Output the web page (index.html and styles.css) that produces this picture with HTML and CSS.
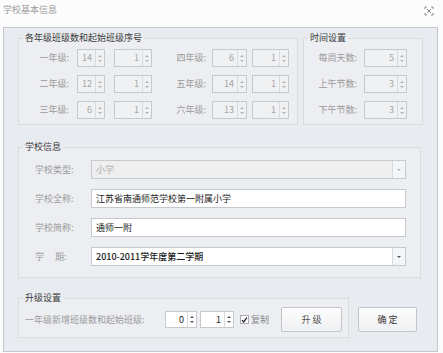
FILE: index.html
```html
<!DOCTYPE html>
<html lang="zh-CN">
<head>
    <meta charset="UTF-8">
    <title>学校基本信息</title>
    <link rel="stylesheet" href="styles.css">
</head>
<body>

<div class="titlebar">
    <span class="title">学校基本信息</span>
    <svg class="close" viewBox="0 0 10 10" width="10" height="10">
        <path d="M1 3V1h2M7 1h2v2M9 7v2H7M3 9H1V7" fill="none" stroke="#8a8a8a" stroke-width="1"/>
        <path d="M3 3l4 4M7 3l-4 4" fill="none" stroke="#8a8a8a" stroke-width="1"/>
    </svg>
</div>

<main class="panel">
    <div class="top-row">
        <fieldset class="group grades">
            <legend>各年级班级数和起始班级序号</legend>
            <div class="grade-row">
                <label class="lbl-a">一年级:</label>
                <span class="spin w28 off"><span class="val">14</span><span class="btns"><i class="up"></i><i class="dn"></i></span></span>
                <span class="spin w38 off gap9"><span class="val">1</span><span class="btns"><i class="up"></i><i class="dn"></i></span></span>
                <label class="lbl-b">四年级:</label>
                <span class="spin w35 off"><span class="val">6</span><span class="btns"><i class="up"></i><i class="dn"></i></span></span>
                <span class="spin w37 off gap5"><span class="val">1</span><span class="btns"><i class="up"></i><i class="dn"></i></span></span>
            </div>
            <div class="grade-row">
                <label class="lbl-a">二年级:</label>
                <span class="spin w28 off"><span class="val">12</span><span class="btns"><i class="up"></i><i class="dn"></i></span></span>
                <span class="spin w38 off gap9"><span class="val">1</span><span class="btns"><i class="up"></i><i class="dn"></i></span></span>
                <label class="lbl-b">五年级:</label>
                <span class="spin w35 off"><span class="val">14</span><span class="btns"><i class="up"></i><i class="dn"></i></span></span>
                <span class="spin w37 off gap5"><span class="val">1</span><span class="btns"><i class="up"></i><i class="dn"></i></span></span>
            </div>
            <div class="grade-row">
                <label class="lbl-a">三年级:</label>
                <span class="spin w28 off"><span class="val">6</span><span class="btns"><i class="up"></i><i class="dn"></i></span></span>
                <span class="spin w38 off gap9"><span class="val">1</span><span class="btns"><i class="up"></i><i class="dn"></i></span></span>
                <label class="lbl-b">六年级:</label>
                <span class="spin w35 off"><span class="val">13</span><span class="btns"><i class="up"></i><i class="dn"></i></span></span>
                <span class="spin w37 off gap5"><span class="val">1</span><span class="btns"><i class="up"></i><i class="dn"></i></span></span>
            </div>
        </fieldset>

        <fieldset class="group timing">
            <legend>时间设置</legend>
            <div class="grade-row">
                <label class="lbl-t">每周天数:</label>
                <span class="spin w43 off"><span class="val">5</span><span class="btns"><i class="up"></i><i class="dn"></i></span></span>
            </div>
            <div class="grade-row">
                <label class="lbl-t">上午节数:</label>
                <span class="spin w43 off"><span class="val">3</span><span class="btns"><i class="up"></i><i class="dn"></i></span></span>
            </div>
            <div class="grade-row">
                <label class="lbl-t">下午节数:</label>
                <span class="spin w43 off"><span class="val">3</span><span class="btns"><i class="up"></i><i class="dn"></i></span></span>
            </div>
        </fieldset>
    </div>

    <fieldset class="group school">
        <legend>学校信息</legend>
        <div class="field-row">
            <label class="lbl-s">学校类型:</label>
            <span class="input combo off"><span class="text">小学</span><span class="drop"><i class="dn"></i></span></span>
        </div>
        <div class="field-row">
            <label class="lbl-s">学校全称:</label>
            <span class="input"><span class="text">江苏省南通师范学校第一附属小学</span></span>
        </div>
        <div class="field-row">
            <label class="lbl-s">学校简称:</label>
            <span class="input"><span class="text">通师一附</span></span>
        </div>
        <div class="field-row">
            <label class="lbl-s">学&emsp;&nbsp;期:</label>
            <span class="input combo"><span class="text term">2010-2011学年度第二学期</span><span class="drop"><i class="dn dark"></i></span></span>
        </div>
    </fieldset>

    <div class="bottom-row">
        <fieldset class="group upgrade">
            <legend>升级设置</legend>
            <div class="upgrade-row">
                <label class="lbl-u">一年级新增班级数和起始班级:</label>
                <span class="spin w32 on"><span class="val">0</span><span class="btns"><i class="up dark"></i><i class="dn dark"></i></span></span>
                <span class="spin w34 on gap3"><span class="val">1</span><span class="btns"><i class="up dark"></i><i class="dn dark"></i></span></span>
                <span class="check">
                    <span class="box">
                        <svg viewBox="0 0 8 8" width="8" height="8"><path d="M1.2 4.2l1.8 2L6.8 1.2" fill="none" stroke="#222" stroke-width="1.4"/></svg>
                    </span>
                    <span class="check-text">复制</span>
                </span>
                <button class="btn up-btn">升 级</button>
            </div>
        </fieldset>
        <button class="btn ok-btn">确 定</button>
    </div>
</main>

</body>
</html>
```

FILE: styles.css
```css
:root {
    --panel-bg: #e8ebef;
    --group-bg: #eceef1;
    --group-border: #d9dde1;
    --field-border: #c5cacf;
    --label-color: #9b9b9b;
    --text-color: #222222;
    --font-cn: "Noto Sans CJK SC", "Noto Sans", sans-serif;
}

* { margin: 0; padding: 0; box-sizing: border-box; }

body {
    width: 443px;
    height: 353px;
    background: #fcfcfc;
    font-family: var(--font-cn);
    font-size: 9px;
    color: var(--text-color);
    overflow: hidden;
}

/* --- Title bar --- */
.titlebar {
    height: 27px;
    display: flex;
    justify-content: space-between;
    padding: 5px 9px 0 3px;
}
.title {
    color: #9a9a9a;
    line-height: 10px;
}
.close { margin-top: 1px; }

/* --- Main panel --- */
.panel {
    margin-left: 3px;
    width: 435px;
    height: 325px;
    background: var(--panel-bg);
    border: 1px solid #c3c7cc;
    padding: 5px 0 0 14px;
}

.group {
    border: 1px solid var(--group-border);
    background: var(--group-bg);
    min-width: 0;
}
.group legend {
    margin-left: 4px;
    padding: 0 2px;
    line-height: 10px;
    color: #3a3a3a;
}

.top-row {
    display: flex;
    gap: 5px;
}
.grades { width: 280px; padding: 6px 0 5px 0; }
.timing { width: 120px; padding: 6px 0 5px 0; }

.grade-row {
    display: flex;
    align-items: center;
    height: 18px;
}
.grade-row + .grade-row { margin-top: 8px; }

.grade-row label {
    color: var(--label-color);
    text-align: right;
    line-height: 18px;
}
.lbl-a { width: 58px; padding-right: 8px; }
.lbl-b { width: 60px; padding-right: 6px; }
.lbl-t { width: 60px; padding-right: 7px; }

/* --- Spin edit --- */
.spin {
    display: flex;
    height: 18px;
    border: 1px solid var(--field-border);
    background: #f0f1f3;
}
.spin.on { background: #ffffff; height: 17px; }
.spin .val {
    flex: 1;
    text-align: right;
    padding-right: 3px;
    line-height: 16px;
    color: #a5a5a5;
}
.spin.on .val { color: var(--text-color); line-height: 15px; }
.spin .btns {
    width: 9px;
    border-left: 1px solid #d8dbdf;
    display: flex;
    flex-direction: column;
    align-items: center;
    justify-content: center;
    gap: 3px;
}
.w28 { width: 28px; }
.w32 { width: 32px; }
.w34 { width: 34px; }
.w35 { width: 35px; }
.w37 { width: 37px; }
.w38 { width: 38px; }
.w43 { width: 43px; }
.gap3 { margin-left: 3px; }
.gap5 { margin-left: 5px; }
.gap9 { margin-left: 9px; }

.up, .dn {
    display: block;
    width: 0;
    height: 0;
    border-left: 2px solid transparent;
    border-right: 2px solid transparent;
}
.up { border-bottom: 2px solid #b3b3b3; }
.dn { border-top: 2px solid #b3b3b3; }
.up.dark { border-bottom-color: #555; }
.dn.dark { border-top-color: #555; }

/* --- School info --- */
.school {
    width: 403px;
    margin-top: 17px;
    padding: 8px 0 11px 0;
}
.field-row {
    display: flex;
    align-items: center;
    height: 19px;
}
.field-row + .field-row { margin-top: 10px; }
.lbl-s {
    width: 72px;
    padding-left: 16px;
    color: var(--label-color);
}
.input {
    width: 315px;
    height: 19px;
    display: flex;
    border: 1px solid var(--field-border);
    background: #ffffff;
}
.input.off { background: #efefef; }
.input .text {
    flex: 1;
    padding-left: 4px;
    line-height: 17px;
}
.input.off .text { color: #aaaaaa; }
.term { font-weight: 500; color: #1a1a1a; }
.drop {
    width: 13px;
    border-left: 1px solid #d6d9dd;
    display: flex;
    align-items: center;
    justify-content: center;
    background: #f4f5f6;
}

/* --- Upgrade --- */
.bottom-row {
    display: flex;
    align-items: flex-end;
    margin-top: 15px;
}
.upgrade {
    width: 331px;
    padding: 4px 0 5px 0;
}
.upgrade-row {
    display: flex;
    align-items: center;
    height: 25px;
}
.lbl-u {
    width: 146px;
    padding-left: 6px;
    color: var(--label-color);
}
.check {
    display: flex;
    align-items: center;
    margin-left: 6px;
}
.check .box {
    width: 9px;
    height: 9px;
    border: 1px solid #a9adb2;
    background: #ffffff;
    display: flex;
    align-items: center;
    justify-content: center;
}
.check-text {
    margin-left: 2px;
    color: #8a8a8a;
}

.btn {
    height: 25px;
    border: 1px solid #c2c6cb;
    border-radius: 2px;
    background: linear-gradient(#fdfdfd, #eff0f2);
    font-family: var(--font-cn);
    font-size: 9px;
    color: #555555;
}
.up-btn { width: 61px; margin-left: 12px; }
.ok-btn { width: 59px; margin: 0 0 6px 9px; color: #333333; }
```
